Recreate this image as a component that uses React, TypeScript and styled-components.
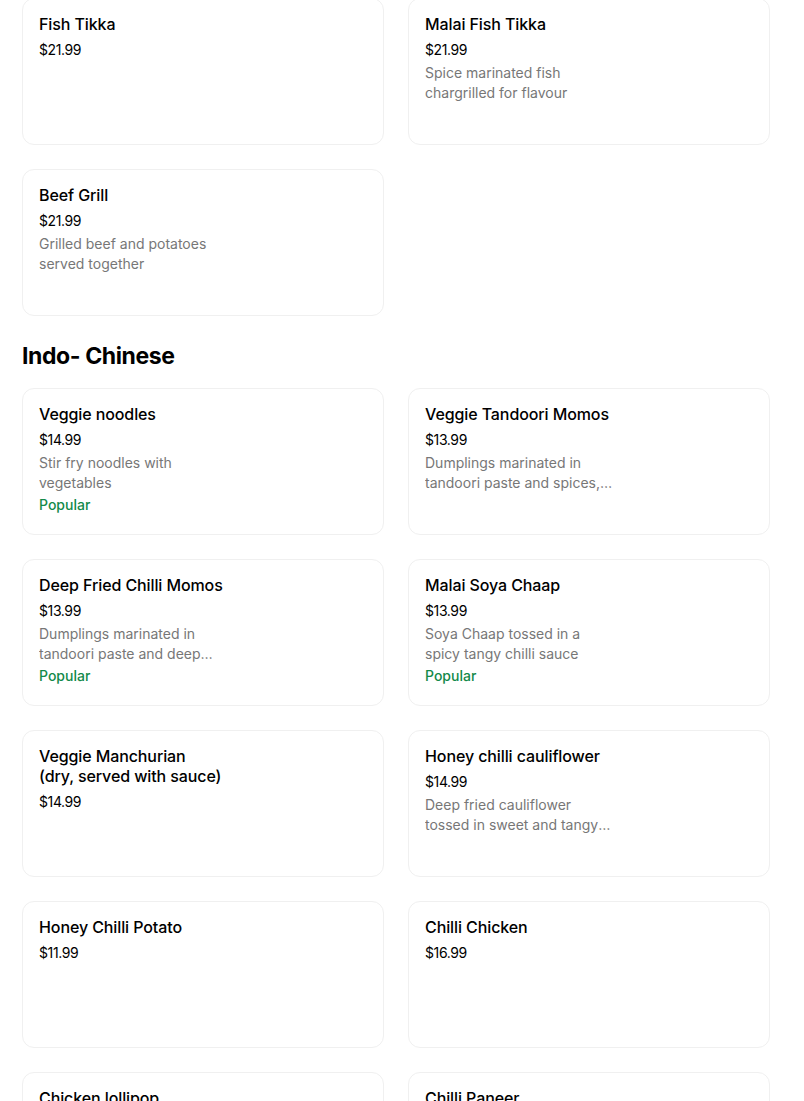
import React from "react";
import styled, { createGlobalStyle } from "styled-components";

const Global = createGlobalStyle`
  html, body { margin: 0; padding: 0; background: #ffffff; }
  body { font-family: Inter, "Noto Sans", sans-serif; color: #000; overflow: hidden; }
`;

type Item = { name: string; price: string; desc?: string; popular?: boolean };

const top: Item[] = [
  { name: "Fish Tikka", price: "$21.99" },
  { name: "Malai Fish Tikka", price: "$21.99", desc: "Spice marinated fish chargrilled for flavour" },
  { name: "Beef Grill", price: "$21.99", desc: "Grilled beef and potatoes served together" },
];

const indo: Item[] = [
  { name: "Veggie noodles", price: "$14.99", desc: "Stir fry noodles with vegetables", popular: true },
  { name: "Veggie Tandoori Momos", price: "$13.99", desc: "Dumplings marinated in tandoori paste and spices, then cooked in the tandoor" },
  { name: "Deep Fried Chilli Momos", price: "$13.99", desc: "Dumplings marinated in tandoori paste and deep fried until crispy", popular: true },
  { name: "Malai Soya Chaap", price: "$13.99", desc: "Soya Chaap tossed in a spicy tangy chilli sauce", popular: true },
  { name: "Veggie Manchurian\n(dry, served with sauce)", price: "$14.99" },
  { name: "Honey chilli cauliflower", price: "$14.99", desc: "Deep fried cauliflower tossed in sweet and tangy honey chilli sauce" },
  { name: "Honey Chilli Potato", price: "$11.99" },
  { name: "Chilli Chicken", price: "$16.99" },
  { name: "Chicken lollipop", price: "$16.99" },
  { name: "Chilli Paneer", price: "$15.99" },
];

const Page = styled.main`
  padding: 0 34px 0 22px;
  margin-top: -2px;
`;

const Grid = styled.div`
  display: grid;
  grid-template-columns: 1fr 1fr;
  column-gap: 24px;
  row-gap: 24px;
`;

const SectionTitle = styled.h2`
  margin: 24px 0 16px;
  font-family: Inter, "Noto Sans", sans-serif;
  font-size: 23px;
  line-height: 32px;
  font-weight: 700;
  letter-spacing: -0.4px;
`;

const Card = styled.div`
  box-sizing: border-box;
  height: 147px;
  border: 1px solid #f0f0f0;
  border-radius: 12px;
  padding: 15px 16px;
  display: flex;
  flex-direction: column;
  background: #fff;
`;

const Name = styled.div`
  font-size: 16px;
  line-height: 20px;
  font-weight: 500;
  color: #000;
  max-width: 210px;
  white-space: pre-line;
  letter-spacing: -0.1px;
`;

const Price = styled.div`
  margin-top: 6px;
  font-size: 14px;
  line-height: 20px;
  color: #000;
  letter-spacing: -0.4px;
`;

const Desc = styled.div`
  margin-top: 3px;
  font-size: 14px;
  line-height: 20px;
  max-height: 40px;
  color: #777777;
  max-width: 190px;
  display: -webkit-box;
  -webkit-line-clamp: 2;
  -webkit-box-orient: vertical;
  overflow: hidden;
`;

const Badge = styled.div`
  margin-top: 2px;
  font-size: 14px;
  line-height: 20px;
  font-weight: 500;
  color: #138a4a;
`;

function MenuCard({ item }: { item: Item }) {
  return (
    <Card>
      <Name>{item.name}</Name>
      <Price>{item.price}</Price>
      {item.desc && <Desc>{item.desc}</Desc>}
      {item.popular && <Badge>Popular</Badge>}
    </Card>
  );
}

export default function App() {
  return (
    <Page>
      <Global />
      <Grid>
        {top.map((i) => (
          <MenuCard key={i.name} item={i} />
        ))}
      </Grid>
      <SectionTitle>Indo- Chinese</SectionTitle>
      <Grid>
        {indo.map((i) => (
          <MenuCard key={i.name} item={i} />
        ))}
      </Grid>
    </Page>
  );
}
